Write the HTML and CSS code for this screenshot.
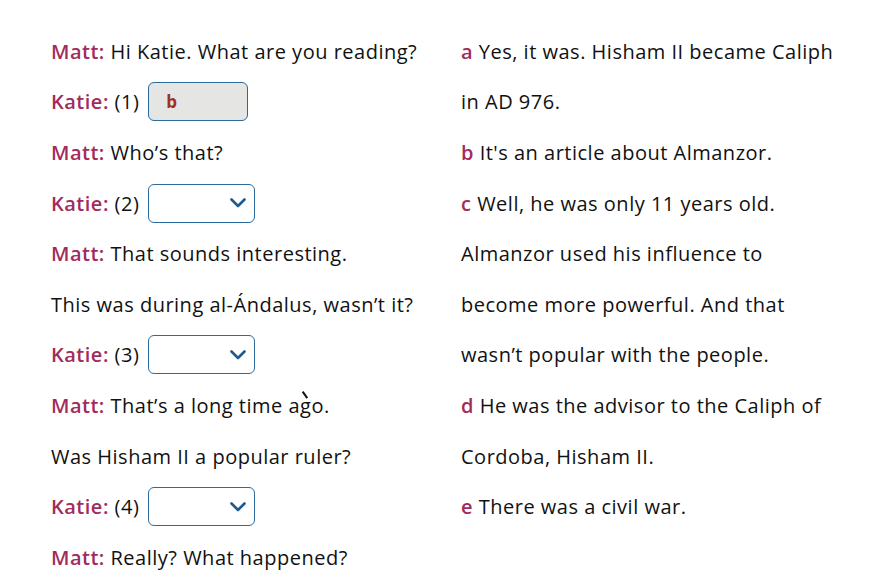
FILE: index.html
```html
<!DOCTYPE html>
<html lang="en">
<head>
<meta charset="utf-8">
<link rel="stylesheet" href="styles.css">
</head>
<body>
<div class="page">
  <div class="col left">
    <div class="row"><span class="who">Matt:</span>&nbsp;Hi Katie. What are you reading?</div>
    <div class="row"><span class="who">Katie:</span>&nbsp;(1)<span class="box answered">b</span></div>
    <div class="row"><span class="who">Matt:</span>&nbsp;Who’s that?</div>
    <div class="row"><span class="who">Katie:</span>&nbsp;(2)<span class="box select"><svg class="chev" width="16" height="10" viewBox="0 0 16 10"><path d="M1.5 1.5 L8 8 L14.5 1.5" fill="none" stroke="#1f5a8e" stroke-width="2.6" stroke-linecap="round" stroke-linejoin="round"/></svg></span></div>
    <div class="row"><span class="who">Matt:</span>&nbsp;That sounds interesting.</div>
    <div class="row">This was during al-Ándalus, wasn’t it?</div>
    <div class="row"><span class="who">Katie:</span>&nbsp;(3)<span class="box select"><svg class="chev" width="16" height="10" viewBox="0 0 16 10"><path d="M1.5 1.5 L8 8 L14.5 1.5" fill="none" stroke="#1f5a8e" stroke-width="2.6" stroke-linecap="round" stroke-linejoin="round"/></svg></span></div>
    <div class="row"><span class="who">Matt:</span>&nbsp;That’s a long time a<span class="tick">g</span>o.</div>
    <div class="row">Was Hisham II a popular ruler?</div>
    <div class="row"><span class="who">Katie:</span>&nbsp;(4)<span class="box select"><svg class="chev" width="16" height="10" viewBox="0 0 16 10"><path d="M1.5 1.5 L8 8 L14.5 1.5" fill="none" stroke="#1f5a8e" stroke-width="2.6" stroke-linecap="round" stroke-linejoin="round"/></svg></span></div>
    <div class="row"><span class="who">Matt:</span>&nbsp;Really? What happened?</div>
  </div>
  <div class="col right">
    <div class="row"><span class="who">a</span>&nbsp;Yes, it was. Hisham II became Caliph</div>
    <div class="row">in AD 976.</div>
    <div class="row"><span class="who">b</span>&nbsp;It's an article about Almanzor.</div>
    <div class="row"><span class="who">c</span>&nbsp;Well, he was only 11 years old.</div>
    <div class="row">Almanzor used his influence to</div>
    <div class="row">become more powerful. And that</div>
    <div class="row">wasn’t popular with the people.</div>
    <div class="row"><span class="who">d</span>&nbsp;He was the advisor to the Caliph of</div>
    <div class="row">Cordoba, Hisham II.</div>
    <div class="row"><span class="who">e</span>&nbsp;There was a civil war.</div>
  </div>
</div>
</body>
</html>
```
FILE: styles.css
```css
html, body {
  margin: 0;
  padding: 0;
  background: #ffffff;
}
body {
  font-family: "Open Sans", sans-serif;
  font-size: 20px;
  letter-spacing: 0.5px;
  color: #111111;
  overflow: hidden;
}
.page {
  display: grid;
  grid-template-columns: 410px 1fr;
  padding: 26px 0 0 51px;
}
.row {
  height: 50.6px;
  display: flex;
  align-items: center;
  white-space: nowrap;
}
.who {
  color: #a22b5c;
  font-weight: 600;
}
.box {
  display: inline-flex;
  align-items: center;
  box-sizing: border-box;
  height: 39px;
  margin-left: 9px;
  border: 1px solid #2b6a9c;
  border-radius: 6px;
}
.answered {
  width: 100px;
  background: #e5e5e4;
  color: #a0301f;
  font-weight: 700;
  font-size: 17px;
  padding-left: 17px;
}
.select {
  width: 107px;
  background: #ffffff;
  justify-content: flex-end;
  padding-right: 8px;
}
.chev {
  display: block;
}
.tick {
  position: relative;
}
.tick::before {
  content: "";
  position: absolute;
  left: 4px;
  top: -1px;
  width: 1.6px;
  height: 8px;
  background: #111;
  transform: rotate(-35deg);
}
```
